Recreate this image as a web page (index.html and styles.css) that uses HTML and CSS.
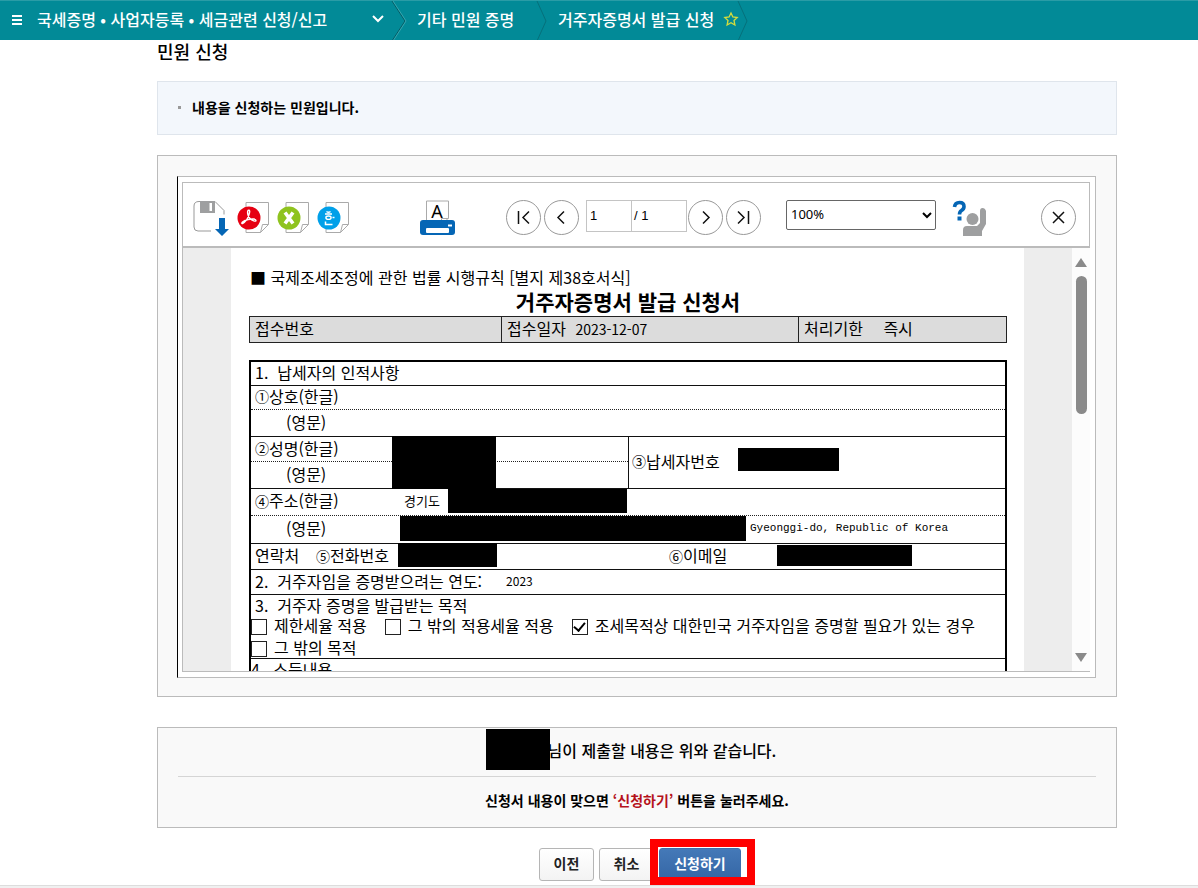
FILE: index.html
```html
<!DOCTYPE html>
<html lang="ko">
<head>
<meta charset="utf-8">
<title>거주자증명서 발급 신청</title>
<link rel="stylesheet" href="styles.css">
</head>
<body>
<header class="topbar">
  <button class="icon-btn menu" aria-label="메뉴"><svg width="10" height="10" viewBox="0 0 10 10"><path d="M0 1h10M0 5h10M0 9h10" stroke="#fff" stroke-width="2"/></svg></button>
  <button class="crumb crumb-main">국세증명 • 사업자등록 • 세금관련 신청/신고
    <svg width="12" height="8" viewBox="0 0 12 8"><path d="M1 1l5 5 5-5" fill="none" stroke="#fff" stroke-width="2"/></svg></button>
  <svg class="sep" width="15" height="40" viewBox="0 0 15 40"><path d="M0 0l13 20L0 40" fill="none" stroke="#065a63"/><path d="M1 0l13 20L1 40" fill="none" stroke="#4fb3ba" stroke-width=".7"/></svg>
  <a class="crumb crumb-mid" href="#">기타 민원 증명</a>
  <svg class="sep" width="11" height="40" viewBox="0 0 11 40"><path d="M0 0l9 20L0 40" fill="none" stroke="#06707b"/></svg>
  <a class="crumb crumb-last" href="#">거주자증명서 발급 신청</a>
  <button class="icon-btn star" aria-label="즐겨찾기"><svg width="14" height="14" viewBox="0 0 14 14"><path d="M7 1l1.900 4 4.300.5-3.200 3 .9 4.500L7 10.800l-3.900 2.200.9-4.500-3.200-3L5.100 5z" fill="none" stroke="#d4dc3c" stroke-width="1.300"/></svg></button>
  <svg class="sep" width="11" height="40" viewBox="0 0 11 40"><path d="M0 0l9 20L0 40" fill="none" stroke="#06707b"/></svg>
</header>

<main class="content">
  <h1 class="title">민원 신청</h1>
  <ul class="notice"><li>내용을 신청하는 민원입니다.</li></ul>

  <section class="viewer">
    <div class="viewer-frame">
      <div class="toolbar">
        <button class="tool" aria-label="저장"><svg width="36" height="37" viewBox="0 0 36 37"><path d="M7 1.500H6Q1 1.500 1 6v21q0 4 4 4h13M22 1.500l9 9v4" fill="none" stroke="#999"/><path d="M7 1h15v12H7z" fill="#9e9fa0"/><path d="M16.500 3h2.500v8h-2.500z" fill="#fff"/><path d="M26 18h6v11h4l-7 7-7-7h4z" fill="#0566b5"/></svg></button>
        <button class="tool file file-first" aria-label="PDF"><svg width="33" height="34" viewBox="0 0 33 34"><path d="M9 1.500h22.500v22l-8 8H9zM31.500 23.500h-6l-2 8" fill="#fff" stroke="#aaa"/><circle cx="12" cy="17" r="11.500" fill="#e60012"/><path d="M11 9.500c2-1 2 1 1 4-1 4-4 8-6.500 9-2 0 1-3 5.500-4s8-.5 8 1-4 0-6-2-3-6-2-8z" fill="none" stroke="#fff" stroke-width="1.400"/></svg></button>
        <button class="tool file" aria-label="엑셀"><svg width="33" height="34" viewBox="0 0 33 34"><path d="M9 1.500h22.500v22l-8 8H9zM31.500 23.500h-6l-2 8" fill="#fff" stroke="#aaa"/><circle cx="12" cy="17" r="11.500" fill="#8fc31f"/><path d="M8 11.500l8 11M16 11.500l-8 11" stroke="#fff" stroke-width="3.600"/></svg></button>
        <button class="tool file" aria-label="한글"><svg width="33" height="34" viewBox="0 0 33 34"><path d="M9 1.500h22.500v22l-8 8H9zM31.500 23.500h-6l-2 8" fill="#fff" stroke="#aaa"/><circle cx="12" cy="17" r="11.500" fill="#00a0e9"/><path d="M9.500 10.500q2 1.500 4 0M8 13h7M8.500 20.500v3h7" fill="none" stroke="#fff" stroke-width="1.500"/><ellipse cx="11.500" cy="16.700" rx="2.600" ry="1.700" fill="none" stroke="#fff" stroke-width="1.400"/><path d="M15.500 16.500h2" stroke="#fff" stroke-width="1.500"/></svg></button>
        <button class="tool print" aria-label="인쇄"><svg width="36" height="36" viewBox="0 0 36 36"><path d="M3 20q-3 0-3 3v9q0 3 3 3h29q3 0 3-3v-9q0-3-3-3z" fill="#0566b5"/><path d="M6.500 1h22v17l-4 4h-18z" fill="#fff" stroke="#aaa"/><path d="M28.500 18.500h-7v3" fill="none" stroke="#aaa"/><path d="M4 21.500h28" stroke="#0566b5" stroke-width="3"/><rect x="6" y="28" width="23" height="5" rx="1" fill="#fff"/><path d="M28 25.500h4" stroke="#fff" stroke-width="2"/><text x="17" y="18" class="glyph-a">A</text></svg></button>
        <button class="round first" aria-label="처음"><svg width="33" height="33" viewBox="0 0 33 33"><path d="M11.500 10v13M22 10.500L16 16.500l6 6" class="stroke"/></svg></button>
        <button class="round" aria-label="이전 페이지"><svg width="33" height="33" viewBox="0 0 33 33"><path d="M19 10.500l-6 6 6 6" class="stroke"/></svg></button>
        <div class="pager"><input class="page-no" value="1" aria-label="페이지"><span class="page-total">/ 1</span></div>
        <button class="round" aria-label="다음 페이지"><svg width="33" height="33" viewBox="0 0 33 33"><path d="M14 10.500l6 6-6 6" class="stroke"/></svg></button>
        <button class="round" aria-label="마지막"><svg width="33" height="33" viewBox="0 0 33 33"><path d="M11 10.500l6 6-6 6M21.500 10v13" class="stroke"/></svg></button>
        <select class="zoom" aria-label="배율"><option>100%</option></select>
        <button class="tool help" aria-label="도움말"><svg width="36" height="37" viewBox="0 0 36 37"><path d="M2.500 7q.5-4.500 5-4.500 4.500 0 4.500 4 0 2.500-2.500 4-2 1.200-2 4" fill="none" stroke="#0566b5" stroke-width="3.600"/><path d="M5.500 16.500h4v4h-4z" fill="#0566b5"/><circle cx="20.500" cy="19" r="6" fill="#9e9fa0"/><path d="M11 36v-6q0-4 4-4h10l3-3V11q0-3 2.500-3T34 11v13l-4 7v5z" fill="#9e9fa0"/></svg></button>
        <button class="round close" aria-label="닫기"><svg width="33" height="33" viewBox="0 0 33 33"><path d="M11 11l11 11M22 11L11 22" class="stroke"/></svg></button>
      </div>

      <div class="doc">
        <article class="sheet">
          <p class="law">■ 국제조세조정에 관한 법률 시행규칙 [별지 제38호서식]</p>
          <h2 class="doc-title">거주자증명서 발급 신청서</h2>
          <table class="receipt"><tr>
            <th class="c-no">접수번호</th>
            <td class="c-date">접수일자 <span class="date">2023-12-07</span></td>
            <td class="c-term">처리기한 <span class="term">즉시</span></td>
          </tr></table>

          <div class="form">
            <div class="row r24">1.&nbsp; 납세자의 인적사항</div>
            <div class="row r24 dotted"><span class="num">①</span>상호(한글)</div>
            <div class="row r27 sub">(영문)</div>
            <div class="row split">
              <div class="names">
                <div class="row r25 dotted"><span class="num">②</span>성명(한글)</div>
                <div class="row r27 sub last">(영문)</div>
                <span class="mask mask-name"></span>
              </div>
              <div class="taxno"><span class="num">③</span>납세자번호<span class="mask mask-tax"></span></div>
            </div>
            <div class="row r27 dotted"><span class="field"><span class="num">④</span>주소(한글)</span><span class="small">경기도</span><span class="mask mask-addr"></span></div>
            <div class="row r28 sub"><span class="field-en">(영문)</span><span class="mask mask-addr-en"></span><span class="latin">Gyeonggi-do, Republic of Korea</span></div>
            <div class="row r26"><span class="contact">연락처</span><span class="phone"><span class="num">⑤</span>전화번호</span><span class="mask mask-phone"></span><span class="mail"><span class="num">⑥</span>이메일</span><span class="mask mask-mail"></span></div>
            <div class="row r25">2.&nbsp; 거주자임을 증명받으려는 연도:<span class="year">2023</span></div>
            <div class="row purpose">
              <div class="line">3.&nbsp; 거주자 증명을 발급받는 목적</div>
              <div class="checks">
                <label class="check"><input type="checkbox">제한세율 적용</label>
                <label class="check"><input type="checkbox">그 밖의 적용세율 적용</label>
                <label class="check"><input type="checkbox" checked>조세목적상 대한민국 거주자임을 증명할 필요가 있는 경우</label>
              </div>
              <div class="checks"><label class="check"><input type="checkbox">그 밖의 목적</label></div>
            </div>
            <div class="row r24 income">4.&nbsp; 소득내용</div>
          </div>
        </article>
        <div class="scroll"><span class="up"></span><span class="thumb"></span><span class="down"></span></div>
      </div>
    </div>
  </section>

  <section class="confirm">
    <p class="confirm-main"><span class="mask mask-user"></span>님이 제출할 내용은 위와 같습니다.</p>
    <p class="confirm-sub">신청서 내용이 맞으면 <em>‘신청하기’</em> 버튼을 눌러주세요.</p>
  </section>

  <div class="actions">
    <button class="btn">이전</button>
    <button class="btn">취소</button>
    <div class="target"><button class="btn primary">신청하기</button><span class="highlight"></span></div>
  </div>
</main>
<footer class="foot"></footer>
</body>
</html>
```

FILE: styles.css
```css
* { box-sizing: border-box; }
body {
  margin: 0;
  min-height: 100vh;
  display: flex;
  flex-direction: column;
  background: #fff;
  color: #000;
  font-family: "Noto Sans CJK KR", sans-serif;
  font-size: 14px;
  overflow: hidden;
}
h1, h2, p, ul { margin: 0; padding: 0; }
button { font-family: inherit; cursor: pointer; }
svg { display: block; flex: none; overflow: visible; }

.topbar {
  height: 40px;
  flex: none;
  display: flex;
  align-items: center;
  background: #028a97;
  border-top: 1px solid #2a9ca6;
  padding-left: 12px;
  overflow: hidden;
}
.icon-btn, .tool { border: 0; padding: 0; background: none; flex: none; }
.icon-btn { padding-bottom: 1px; }
.star { padding-bottom: 3px; }
.crumb {
  border: 0;
  padding: 0 0 3px;
  background: none;
  color: #fff;
  font-size: 16px;
  font-weight: 500;
  line-height: 24px;
  text-decoration: none;
  white-space: nowrap;
}
.crumb-main { display: flex; align-items: center; justify-content: space-between; width: 347px; margin: 0 8px 0 15px; }
.crumb-mid { width: 120px; margin-left: 10px; }
.crumb-last { width: 166px; margin-left: 10px; }
.sep { align-self: stretch; }

.content { width: 1117px; max-width: 100%; padding-left: 157px; flex: none; }
.title { font-size: 18px; font-weight: 500; line-height: 22px; margin-bottom: 19px; }

.notice {
  list-style: none;
  background: #f3f7fc;
  border: 1px solid #dfe5ec;
  padding: 14px 20px 16px;
  margin-bottom: 20px;
}
.notice li { display: flex; align-items: center; gap: 11px; font-weight: 700; font-size: 14px; line-height: 22px; }
.notice li::before { content: ""; width: 3px; height: 3px; background: #999; }

.viewer { background: #f9f9f9; border: 1px solid #bbb; padding: 20px 20px 18px 19px; margin-bottom: 30px; }
.viewer-frame { background: #fff; border: 1px solid #bbb; border-left-color: #000; padding: 5px 5px 5px 4px; }
.toolbar {
  display: flex;
  align-items: flex-start;
  height: 66px;
  padding: 16px 13px 0 10px;
  border: 1px solid #bbb;
  border-bottom-width: 2px;
}
.toolbar .tool { margin-top: 1px; }
.toolbar .file { margin-left: 7px; margin-top: 2px; }
.toolbar .file-first { margin-left: 8px; }
.print { margin-left: 70px; }
.round {
  width: 35px;
  height: 35px;
  flex: none;
  padding: 0;
  margin: 1px 3px 0 0;
  border: 1px solid #999;
  border-radius: 50%;
  background: #fff;
}
.first { margin-left: 50px; }
.close { margin: 1px 0 0 auto; }
.stroke { fill: none; stroke: #111; stroke-width: 1.500; }
.glyph-a { font: 18px/18px "Noto Sans", sans-serif; fill: #000; text-anchor: middle; }
.pager { display: flex; height: 32px; width: 101px; margin: 1px 1px 0 4px; border: 1px solid #c4c4c4; font: 13px/30px "Liberation Sans", sans-serif; }
.page-no { width: 45px; border: 0; border-right: 1px solid #c4c4c4; padding: 0 3px; font: inherit; }
.page-total { padding-left: 2px; }
.zoom {
  width: 150px;
  height: 30px;
  margin: 1px 0 0 22px;
  padding-bottom: 2px;
  border: 1px solid #666;
  border-radius: 2px;
  background: #fff;
  color: #000;
  font: 13px "Noto Sans", sans-serif;
}
.help { margin-left: 16px; }

.doc {
  height: 424px;
  overflow: hidden;
  display: flex;
  position: relative;
  background: #ededed;
  border: 1px solid #bbb;
  border-width: 0 0 1px 1px;
  padding-left: 48px;
}
.sheet {
  width: 793px;
  flex: none;
  height: 600px;
  background: #fff;
  padding: 17px 17px 0 18px;
  font-size: 16px;
  font-weight: 400;
  line-height: 20px;
}
.law { padding-left: 1px; line-height: 24px; }
.doc-title { font-size: 21px; font-weight: 700; line-height: 25px; text-align: center; padding-bottom: 2px; }
.receipt { width: 100%; height: 27px; border-collapse: collapse; table-layout: fixed; background: #dcdcdc; margin-bottom: 17px; }
.receipt th, .receipt td { border: 1px solid #222; padding: 0 5px 3px; text-align: left; font-weight: 400; line-height: 20px; }
.c-no { width: 252px; }
.c-date { width: 297px; }
.date { font-size: 14px; margin-left: 5px; }
.term { margin-left: 16px; }

.form { border: 2px solid #000; }
.row { display: flex; align-items: center; border-bottom: 1px solid #111; padding: 0 0 3px 4px; white-space: nowrap; }
.r24 { height: 24px; }
.r25 { height: 25px; }
.r26 { height: 26px; }
.r27 { height: 27px; }
.r28 { height: 28px; }
.dotted { border-bottom: 1px dotted #222; }
.sub { padding-left: 35px; }
.last { border-bottom: 0; }
.num { font-size: 14px; }
.split { padding: 0; align-items: stretch; height: 52px; }
.names { width: 378px; border-right: 1px solid #111; position: relative; }
.taxno { display: flex; align-items: center; padding: 0 0 3px 3px; }
.mask { background: #000; flex: none; }
.mask-name { position: absolute; left: 141px; top: -1px; width: 104px; height: 53px; }
.mask-tax { width: 101px; height: 23px; margin: 0 0 4px 18px; }
.field { width: 149px; }
.small { width: 44px; font-size: 13px; }
.mask-addr { width: 179px; height: 24px; }
.field-en { width: 114px; }
.mask-addr-en { width: 346px; height: 25px; }
.latin { margin-left: 4px; font: 11px "Liberation Mono", monospace; }
.contact { width: 61px; }
.phone { width: 82px; }
.mask-phone { width: 99px; height: 24px; }
.mail { width: 108px; margin-left: 172px; }
.mask-mail { width: 135px; height: 21px; }
.year { font-size: 12px; margin-left: 24px; }
.purpose { display: block; height: 64px; padding: 0; }
.line { padding-left: 4px; line-height: 20px; }
.checks { display: flex; gap: 18px; height: 22px; }
.check { display: flex; align-items: center; gap: 7px; line-height: 20px; padding-bottom: 2px; }
.check input {
  appearance: none;
  width: 16px;
  height: 16px;
  flex: none;
  margin: 3px 0 0;
  border: 1px solid #222;
  background: #fff;
  display: grid;
  place-items: center;
}
.check input:checked::after { content: ""; width: 5px; height: 9px; border: solid #000; border-width: 0 2px 2px 0; rotate: 40deg; margin-bottom: 3px; }
.income { padding-left: 0; }

.scroll { margin-left: auto; width: 18px; background: #fcfcfc; display: flex; flex-direction: column; align-items: center; padding: 10px 0 9px; }
.up, .down { border: 6px solid transparent; border-top-width: 0; border-bottom: 9px solid #8a8a8a; }
.down { border-bottom: 0; border-top: 9px solid #8a8a8a; margin-top: auto; }
.thumb { width: 11px; height: 138px; margin-top: 9px; border-radius: 6px; background: #8a8a8a; }

.confirm { background: #f9f9f9; border: 1px solid #bbb; padding: 0 20px; text-align: center; margin-bottom: 20px; }
.confirm p { display: flex; align-items: center; justify-content: center; font-weight: 700; white-space: pre; }
.confirm .confirm-main { height: 49px; padding: 0 12px 5px 0; font-size: 16px; font-weight: 500; border-bottom: 1px solid #d5d5d5; }
.confirm .confirm-sub { height: 50px; padding-bottom: 5px; font-size: 14px; }
.confirm em { font-style: normal; color: #b5121b; }
.mask-user { width: 64px; height: 41px; margin-right: -2px; z-index: 1; }

.actions { display: flex; justify-content: center; gap: 5px; padding-left: 6px; }
.btn {
  width: 55px;
  height: 33px;
  padding: 0 0 3px;
  border: 1px solid #b5b5b5;
  border-radius: 3px;
  background: linear-gradient(#fff, #f3f3f3);
  color: #222;
  font-size: 14px;
  font-weight: 700;
}
.target { position: relative; }
.primary { width: 82px; border-color: #3d6fae; background: linear-gradient(#4479b8, #3566a5); color: #fff; }
.highlight { position: absolute; left: -9px; top: -9px; width: 105px; height: 46px; border: 8px solid #f00; pointer-events: none; }
.foot { margin-top: 4px; height: 3px; flex: none; background: #f0f0f0; border-top: 1px solid #ddd; }
```
